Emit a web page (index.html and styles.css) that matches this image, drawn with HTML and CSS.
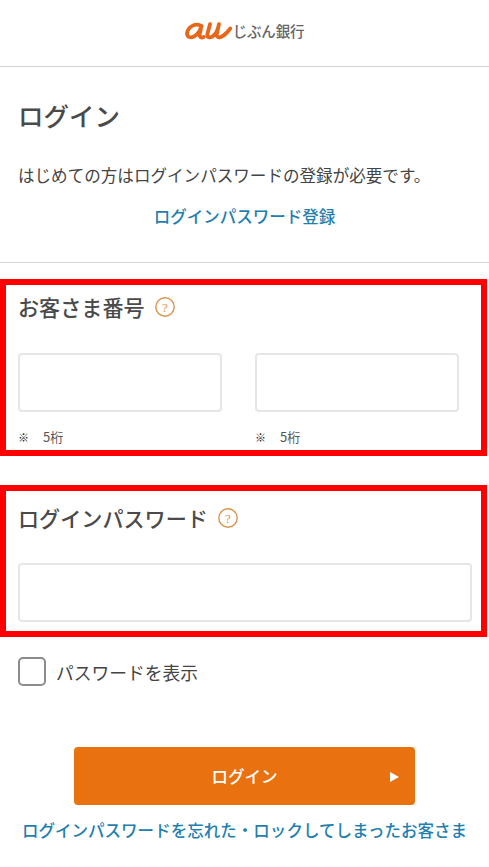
FILE: index.html
```html
<!DOCTYPE html>
<html lang="ja">
<head>
<meta charset="utf-8">
<title>ログイン</title>
<link rel="stylesheet" href="styles.css">
</head>
<body>
<header class="site-header">
  <div class="logo">
    <svg class="au-mark" width="47" height="20" viewBox="0 0 47 20" aria-hidden="true">
      <g fill="none" stroke="#e8661a" stroke-linecap="round" stroke-linejoin="round">
        <path stroke-width="3.800" d="M16.500 5C11 1.800 3.500 5 2.200 11.500c-.8 4.500 3 6 6.800 4 3.500-1.900 6-5.800 7.500-10.500l-1.800 8c-.6 3.200 1.500 4.200 4 3"/>
        <path stroke-width="3.800" d="M25 3.200l-2.600 9.800c-.8 3.600 2.600 4 5.200 2.400 3-1.900 5.200-6.200 6.400-12.200l-2 9c-.7 3.600 1.300 4.800 3.800 3.800 2.800-1.100 6-3.800 9.500-8.500"/>
      </g>
    </svg>
    <span class="logo-text">じぶん銀行</span>
  </div>
</header>

<section class="intro">
  <h1 class="page-title">ログイン</h1>
  <p class="intro-text">はじめての方はログインパスワードの登録が必要です。</p>
  <p class="center-link"><a class="link" href="#">ログインパスワード登録</a></p>
</section>

<section class="field-box customer">
  <h2 class="field-title">お客さま番号
    <svg class="help" width="20" height="20" viewBox="0 0 20 20" aria-hidden="true"><circle cx="10" cy="10" r="9.200" fill="none" stroke="#dc944e" stroke-width="1.400"/><text class="help-mark" x="10" y="14.500" text-anchor="middle">?</text></svg>
  </h2>
  <div class="two-inputs">
    <div class="input-col">
      <div class="text-input"></div>
      <p class="note"><span class="note-mark">※</span>5桁</p>
    </div>
    <div class="input-col">
      <div class="text-input"></div>
      <p class="note"><span class="note-mark">※</span>5桁</p>
    </div>
  </div>
</section>

<section class="field-box password">
  <h2 class="field-title">ログインパスワード
    <svg class="help" width="20" height="20" viewBox="0 0 20 20" aria-hidden="true"><circle cx="10" cy="10" r="9.200" fill="none" stroke="#dc944e" stroke-width="1.400"/><text class="help-mark" x="10" y="14.500" text-anchor="middle">?</text></svg>
  </h2>
  <div class="text-input"></div>
</section>

<label class="show-password">
  <span class="checkbox"></span>
  <span>パスワードを表示</span>
</label>

<div class="actions">
  <a class="login-button" href="#">
    <span>ログイン</span>
    <span class="arrow"></span>
  </a>
  <a class="link forgot" href="#">ログインパスワードを忘れた・ロックしてしまったお客さま</a>
</div>
</body>
</html>
```

FILE: styles.css
```css
* { box-sizing: border-box; }
html, body { margin: 0; padding: 0; }
body {
  width: 489px;
  height: 867px;
  overflow: hidden;
  background: #fff;
  color: #444;
  font-family: "Noto Sans CJK JP", "Noto Sans", sans-serif;
}
.site-header {
  height: 67px;
  border-bottom: 1px solid #d4d4d4;
  display: flex;
  align-items: center;
  justify-content: center;
  padding-bottom: 4px;
}
.logo { display: flex; align-items: center; gap: 1px; }
.logo-text { font-size: 14.500px; font-weight: 500; color: #666; line-height: 20px; letter-spacing: -.2px; }
.intro {
  height: 196px;
  padding: 30px 18px 0;
  border-bottom: 1px solid #d4d4d4;
}
.page-title { margin: 0; font-size: 25.500px; line-height: 36px; font-weight: 500; color: #4a4a4a; }
.intro-text { margin: 30px 0 0; font-size: 16.570px; line-height: 24px; white-space: nowrap; }
.center-link { margin: 17px 0 0; text-align: center; font-size: 16.500px; line-height: 24px; }
.link { color: #1f7fb0; text-decoration: none; font-weight: 500; }
.field-box {
  width: 487px;
  border: 6px solid #f00;
  padding: 0 12px;
}
.customer { height: 177px; margin-top: 16px; padding-top: 7px; }
.password { height: 152px; margin-top: 29px; padding-top: 12px; padding-right: 9px; }
.field-title {
  margin: 0;
  display: flex;
  align-items: center;
  gap: 10px;
  font-size: 21.100px;
  line-height: 30px;
  font-weight: 500;
  color: #4a4a4a;
}
.help { flex: none; }
.help-mark { font-family: "Liberation Serif", serif; font-size: 13px; fill: #dc944e; }
.two-inputs { display: flex; gap: 33px; margin-top: 31px; }
.input-col { width: 204px; }
.text-input {
  height: 59px;
  border: 2px solid #e6e6e6;
  border-radius: 4px;
  background: #fff;
}
.password .text-input { margin-top: 30px; }
.note { margin: 16px 0 0; font-size: 13px; line-height: 18px; color: #555; display: flex; }
.note-mark { width: 25px; font-size: 11px; color: #222; }
.show-password {
  display: flex;
  align-items: center;
  gap: 10px;
  margin: 20px 0 0 18px;
  font-size: 17.750px;
  line-height: 28px;
  color: #444;
}
.checkbox {
  width: 28px;
  height: 29px;
  border: 2px solid #8c8c8c;
  border-radius: 5px;
}
.actions {
  margin-top: 61px;
  display: flex;
  flex-direction: column;
  align-items: center;
}
.login-button {
  width: 341px;
  height: 58px;
  border-radius: 4px;
  background: #e9710f;
  color: #fff;
  font-size: 16.500px;
  font-weight: 500;
  text-decoration: none;
  display: flex;
  align-items: center;
  justify-content: center;
  position: relative;
}
.arrow {
  position: absolute;
  right: 16px;
  top: 25px;
  width: 0;
  height: 0;
  border-left: 9px solid #fff;
  border-top: 5px solid transparent;
  border-bottom: 5px solid transparent;
}
.forgot { margin-top: 13px; font-size: 16.550px; line-height: 24px; white-space: nowrap; }
```
